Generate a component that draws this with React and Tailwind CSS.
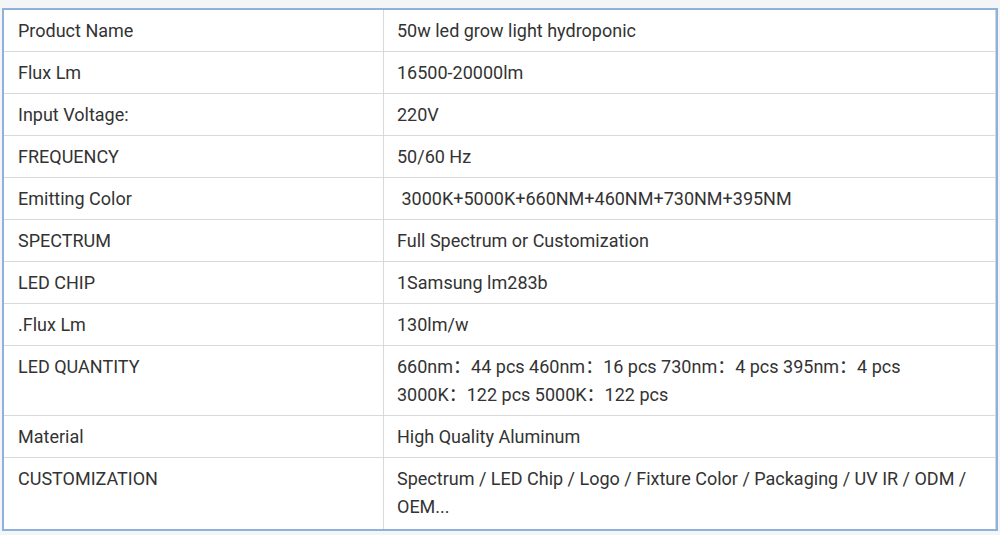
const rows = [
  ['Product Name', '50w led grow light hydroponic'],
  ['Flux Lm', '16500-20000lm'],
  ['Input Voltage:', '220V'],
  ['FREQUENCY', '50/60 Hz'],
  ['Emitting Color', '\u00a03000K+5000K+660NM+460NM+730NM+395NM'],
  ['SPECTRUM', 'Full Spectrum or Customization'],
  ['LED CHIP', '1Samsung lm283b'],
  ['.Flux Lm', '130lm/w'],
  [
    'LED QUANTITY',
    <>
      660nm：44 pcs 460nm：16 pcs 730nm：4 pcs 395nm：4 pcs
      <br />
      3000K：122 pcs 5000K：122 pcs
    </>,
  ],
  ['Material', 'High Quality Aluminum'],
  ['CUSTOMIZATION', 'Spectrum / LED Chip / Logo / Fixture Color / Packaging / UV IR / ODM / OEM...'],
];

export default function App() {
  return (
    <div
      className="w-[1000px] h-[535px] bg-[#f4f5f7] pt-[8px] pl-[2px] text-[#333333]"
      style={{ fontFamily: 'Roboto, "Noto Sans CJK SC", sans-serif' }}
    >
      <div className="w-[996px] border-2 border-[#8fb2dd] bg-white">
        <div className="border-r border-[#d6d6d6]">
          {rows.map(([label, value], i) => {
            const last = i === rows.length - 1;
            return (
              <div key={i} className={`flex ${last ? '' : 'border-b border-[#d9d9d9]'}`}>
                <div
                  className={`w-[380px] shrink-0 border-r border-[#d9d9d9] pl-[14px] pr-3 pt-[7px] text-[18px] leading-[28px] ${last ? 'pb-[8px]' : 'pb-[6px]'}`}
                >
                  {label}
                </div>
                <div
                  className={`flex-1 pl-[13px] pr-[18px] pt-[7px] text-[18px] leading-[28px] ${last ? 'pb-[8px]' : 'pb-[6px]'}`}
                >
                  {value}
                </div>
              </div>
            );
          })}
        </div>
      </div>
    </div>
  );
}
